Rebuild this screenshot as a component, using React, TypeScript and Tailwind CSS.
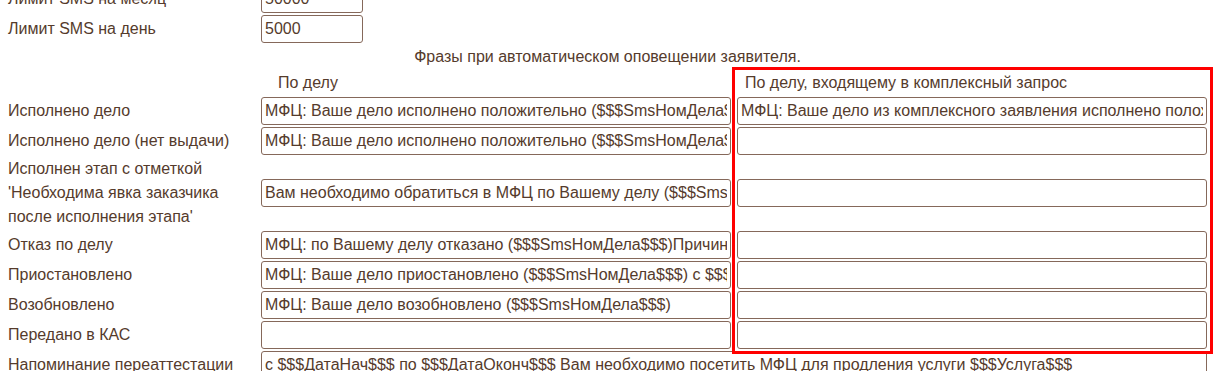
import React from 'react';

interface PhraseRow {
  id: string;
  label: React.ReactNode;
  single: string;
  complex: string;
  tall?: boolean;
}

const rows: PhraseRow[] = [
  {
    id: 'done',
    label: 'Исполнено дело',
    single: 'МФЦ: Ваше дело исполнено положительно ($$$SmsНомДела$$$). Результат можно получить в МФЦ',
    complex: 'МФЦ: Ваше дело из комплексного заявления исполнено положительно ($$$SmsНомДела$$$)',
  },
  {
    id: 'done-no-issue',
    label: 'Исполнено дело (нет выдачи)',
    single: 'МФЦ: Ваше дело исполнено положительно ($$$SmsНомДела$$$)',
    complex: '',
  },
  {
    id: 'stage',
    label: (
      <>
        Исполнен этап с отметкой
        <br />
        'Необходима явка заказчика
        <br />
        после исполнения этапа'
      </>
    ),
    single: 'Вам необходимо обратиться в МФЦ по Вашему делу ($$$SmsНомДела$$$)',
    complex: '',
    tall: true,
  },
  {
    id: 'refused',
    label: 'Отказ по делу',
    single: 'МФЦ: по Вашему делу отказано ($$$SmsНомДела$$$)Причина: $$$Причина$$$',
    complex: '',
  },
  {
    id: 'paused',
    label: 'Приостановлено',
    single: 'МФЦ: Ваше дело приостановлено ($$$SmsНомДела$$$) с $$$ДатаНач$$$',
    complex: '',
  },
  {
    id: 'resumed',
    label: 'Возобновлено',
    single: 'МФЦ: Ваше дело возобновлено ($$$SmsНомДела$$$)',
    complex: '',
  },
  {
    id: 'kas',
    label: 'Передано в КАС',
    single: '',
    complex: '',
  },
];

const Field: React.FC<{ value: string; className?: string }> = ({ value, className = '' }) => (
  <input
    type="text"
    readOnly
    defaultValue={value}
    className={`h-[28px] w-full rounded-[3px] border border-[#85685a] bg-white px-[3px] text-[16px] text-[#553b2c] outline-none ${className}`}
  />
);

const Label: React.FC<{ children: React.ReactNode; tall?: boolean }> = ({ children, tall }) => (
  <div className={`flex items-center leading-[24px] ${tall ? 'h-[72px]' : 'h-[28px]'}`}>{children}</div>
);

export default function App() {
  return (
    <div
      className="relative h-[371px] w-[1215px] overflow-hidden bg-white text-[16px] text-[#553b2c]"
      style={{ fontFamily: '"Liberation Sans", Arial, sans-serif' }}
    >
      <div className="mt-[-15px] grid grid-cols-[247px_470px_470px] gap-x-[6px] gap-y-[2px] pl-[8px]">
        {/* Limits */}
        <Label>Лимит SMS на месяц</Label>
        <div className="col-span-2">
          <Field value="50000" className="!w-[102px]" />
        </div>
        <Label>Лимит SMS на день</Label>
        <div className="col-span-2">
          <Field value="5000" className="!w-[102px]" />
        </div>

        {/* Phrases header */}
        <div className="col-span-3 h-[24px] leading-[24px] text-center">
          Фразы при автоматическом оповещении заявителя.
        </div>
        <div />
        <div className="h-[24px] pl-[17px] leading-[24px]">По делу</div>
        <div className="h-[24px] pl-[8px] leading-[24px]">По делу, входящему в комплексный запрос</div>

        {rows.map((row) => (
          <React.Fragment key={row.id}>
            <Label tall={row.tall}>{row.label}</Label>
            <div className="flex items-center">
              <Field value={row.single} />
            </div>
            <div className="flex items-center">
              <Field value={row.complex} />
            </div>
          </React.Fragment>
        ))}

        <Label>Напоминание переаттестации</Label>
        <div className="col-span-2">
          <Field value="с $$$ДатаНач$$$ по $$$ДатаОконч$$$ Вам необходимо посетить МФЦ для продления услуги $$$Услуга$$$" />
        </div>
      </div>

      {/* highlight frame */}
      <div className="pointer-events-none absolute left-[732px] top-[67px] h-[287px] w-[481px] border-[3px] border-[#ff0000]" />
    </div>
  );
}
